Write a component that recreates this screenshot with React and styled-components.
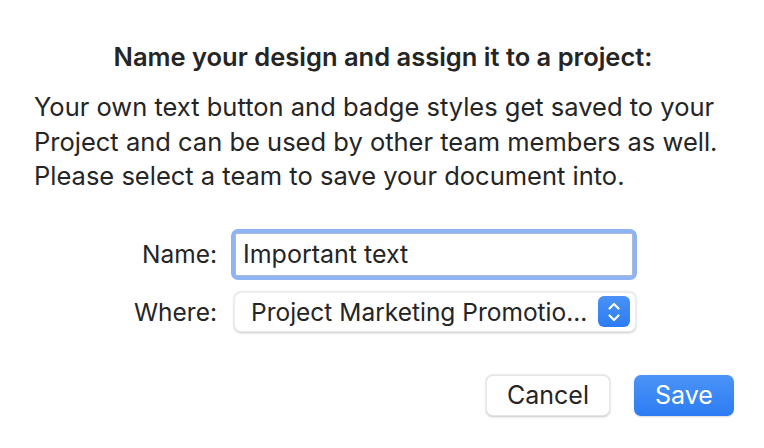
import React from 'react'
import styled, { createGlobalStyle } from 'styled-components'

const GlobalStyle = createGlobalStyle`
  html, body {
    margin: 0;
    padding: 0;
    background: #ffffff;
  }
  * {
    box-sizing: border-box;
  }
`

const Dialog = styled.div`
  width: 764px;
  height: 448px;
  padding: 42px 30px 0 34px;
  display: flex;
  flex-direction: column;
  font-family: Inter, 'Noto Sans', sans-serif;
  color: #252525;
  background: #ffffff;
`

const Title = styled.h1`
  margin: 0;
  font-size: 25.5px;
  line-height: 30px;
  font-weight: 600;
  text-align: center;
  padding-right: 2px;
  white-space: nowrap;
`

const Message = styled.p`
  margin: 18px 0 0;
  font-size: 25.5px;
  line-height: 34.5px;
  font-weight: 400;
  white-space: nowrap;
`

const Form = styled.div`
  margin-top: 35px;
  display: grid;
  grid-template-columns: 183px 406px;
  column-gap: 14px;
  row-gap: 12px;
  align-items: center;
`

const Label = styled.label`
  font-size: 24.5px;
  text-align: right;
`

const FocusRing = styled.div`
  height: 51px;
  padding: 4px;
  border-radius: 7px;
  background: #90b4f3;
`

const TextInput = styled.input`
  width: 100%;
  height: 100%;
  border: 1px solid #a9b9d6;
  border-radius: 2px;
  padding: 0 7px;
  font-family: inherit;
  font-size: 25px;
  color: #252525;
  outline: none;
  background: #ffffff;
`

const Popup = styled.div`
  width: 402px;
  height: 40px;
  margin-left: 3px;
  border-radius: 7px;
  background: #ffffff;
  border: 1px solid rgba(0, 0, 0, 0.08);
  box-shadow: 0 0.5px 2.5px rgba(0, 0, 0, 0.22);
  display: flex;
  align-items: center;
  padding: 0 5px 0 16px;
`

const PopupText = styled.span`
  flex: 1;
  font-size: 24.5px;
  white-space: nowrap;
  overflow: hidden;
`

const Stepper = styled.span`
  width: 32px;
  height: 31px;
  border-radius: 6px;
  background: linear-gradient(#4a92f7, #2b7bf2);
  display: flex;
  align-items: center;
  justify-content: center;
`

const Buttons = styled.div`
  margin-top: 43px;
  display: flex;
  justify-content: flex-end;
  gap: 24px;
`

const Button = styled.button`
  height: 41px;
  width: ${(p) => p.$width}px;
  border-radius: 7px;
  font-family: inherit;
  font-size: 25px;
  padding: 0;
  border: ${(p) => (p.$primary ? 'none' : '1px solid rgba(0,0,0,0.1)')};
  background: ${(p) => (p.$primary ? 'linear-gradient(#4b93f7, #2d7cf3)' : '#ffffff')};
  color: ${(p) => (p.$primary ? '#ffffff' : '#252525')};
  box-shadow: ${(p) => (p.$primary ? '0 0.5px 1.5px rgba(0,0,0,0.15)' : '0 0.5px 2.5px rgba(0,0,0,0.22)')};
`

const Chevrons = () => (
  <svg width="14" height="22" viewBox="0 0 14 22" fill="none">
    <path d="M2.5 7.5 L7 3 L11.5 7.5" stroke="#fff" strokeWidth="2.2" strokeLinecap="round" strokeLinejoin="round" />
    <path d="M2.5 14.5 L7 19 L11.5 14.5" stroke="#fff" strokeWidth="2.2" strokeLinecap="round" strokeLinejoin="round" />
  </svg>
)

export default function App() {
  return (
    <>
      <GlobalStyle />
      <Dialog>
        <Title>Name your design and assign it to a project:</Title>
        <Message>
          Your own text button and badge styles get saved to your
          <br />
          Project and can be used by other team members as well.
          <br />
          Please select a team to save your document into.
        </Message>
        <Form>
          <Label>Name:</Label>
          <FocusRing>
            <TextInput defaultValue="Important text" />
          </FocusRing>
          <Label>Where:</Label>
          <Popup>
            <PopupText>Project Marketing Promotio...</PopupText>
            <Stepper>
              <Chevrons />
            </Stepper>
          </Popup>
        </Form>
        <Buttons>
          <Button $width={124}>Cancel</Button>
          <Button $primary $width={100}>Save</Button>
        </Buttons>
      </Dialog>
    </>
  )
}
